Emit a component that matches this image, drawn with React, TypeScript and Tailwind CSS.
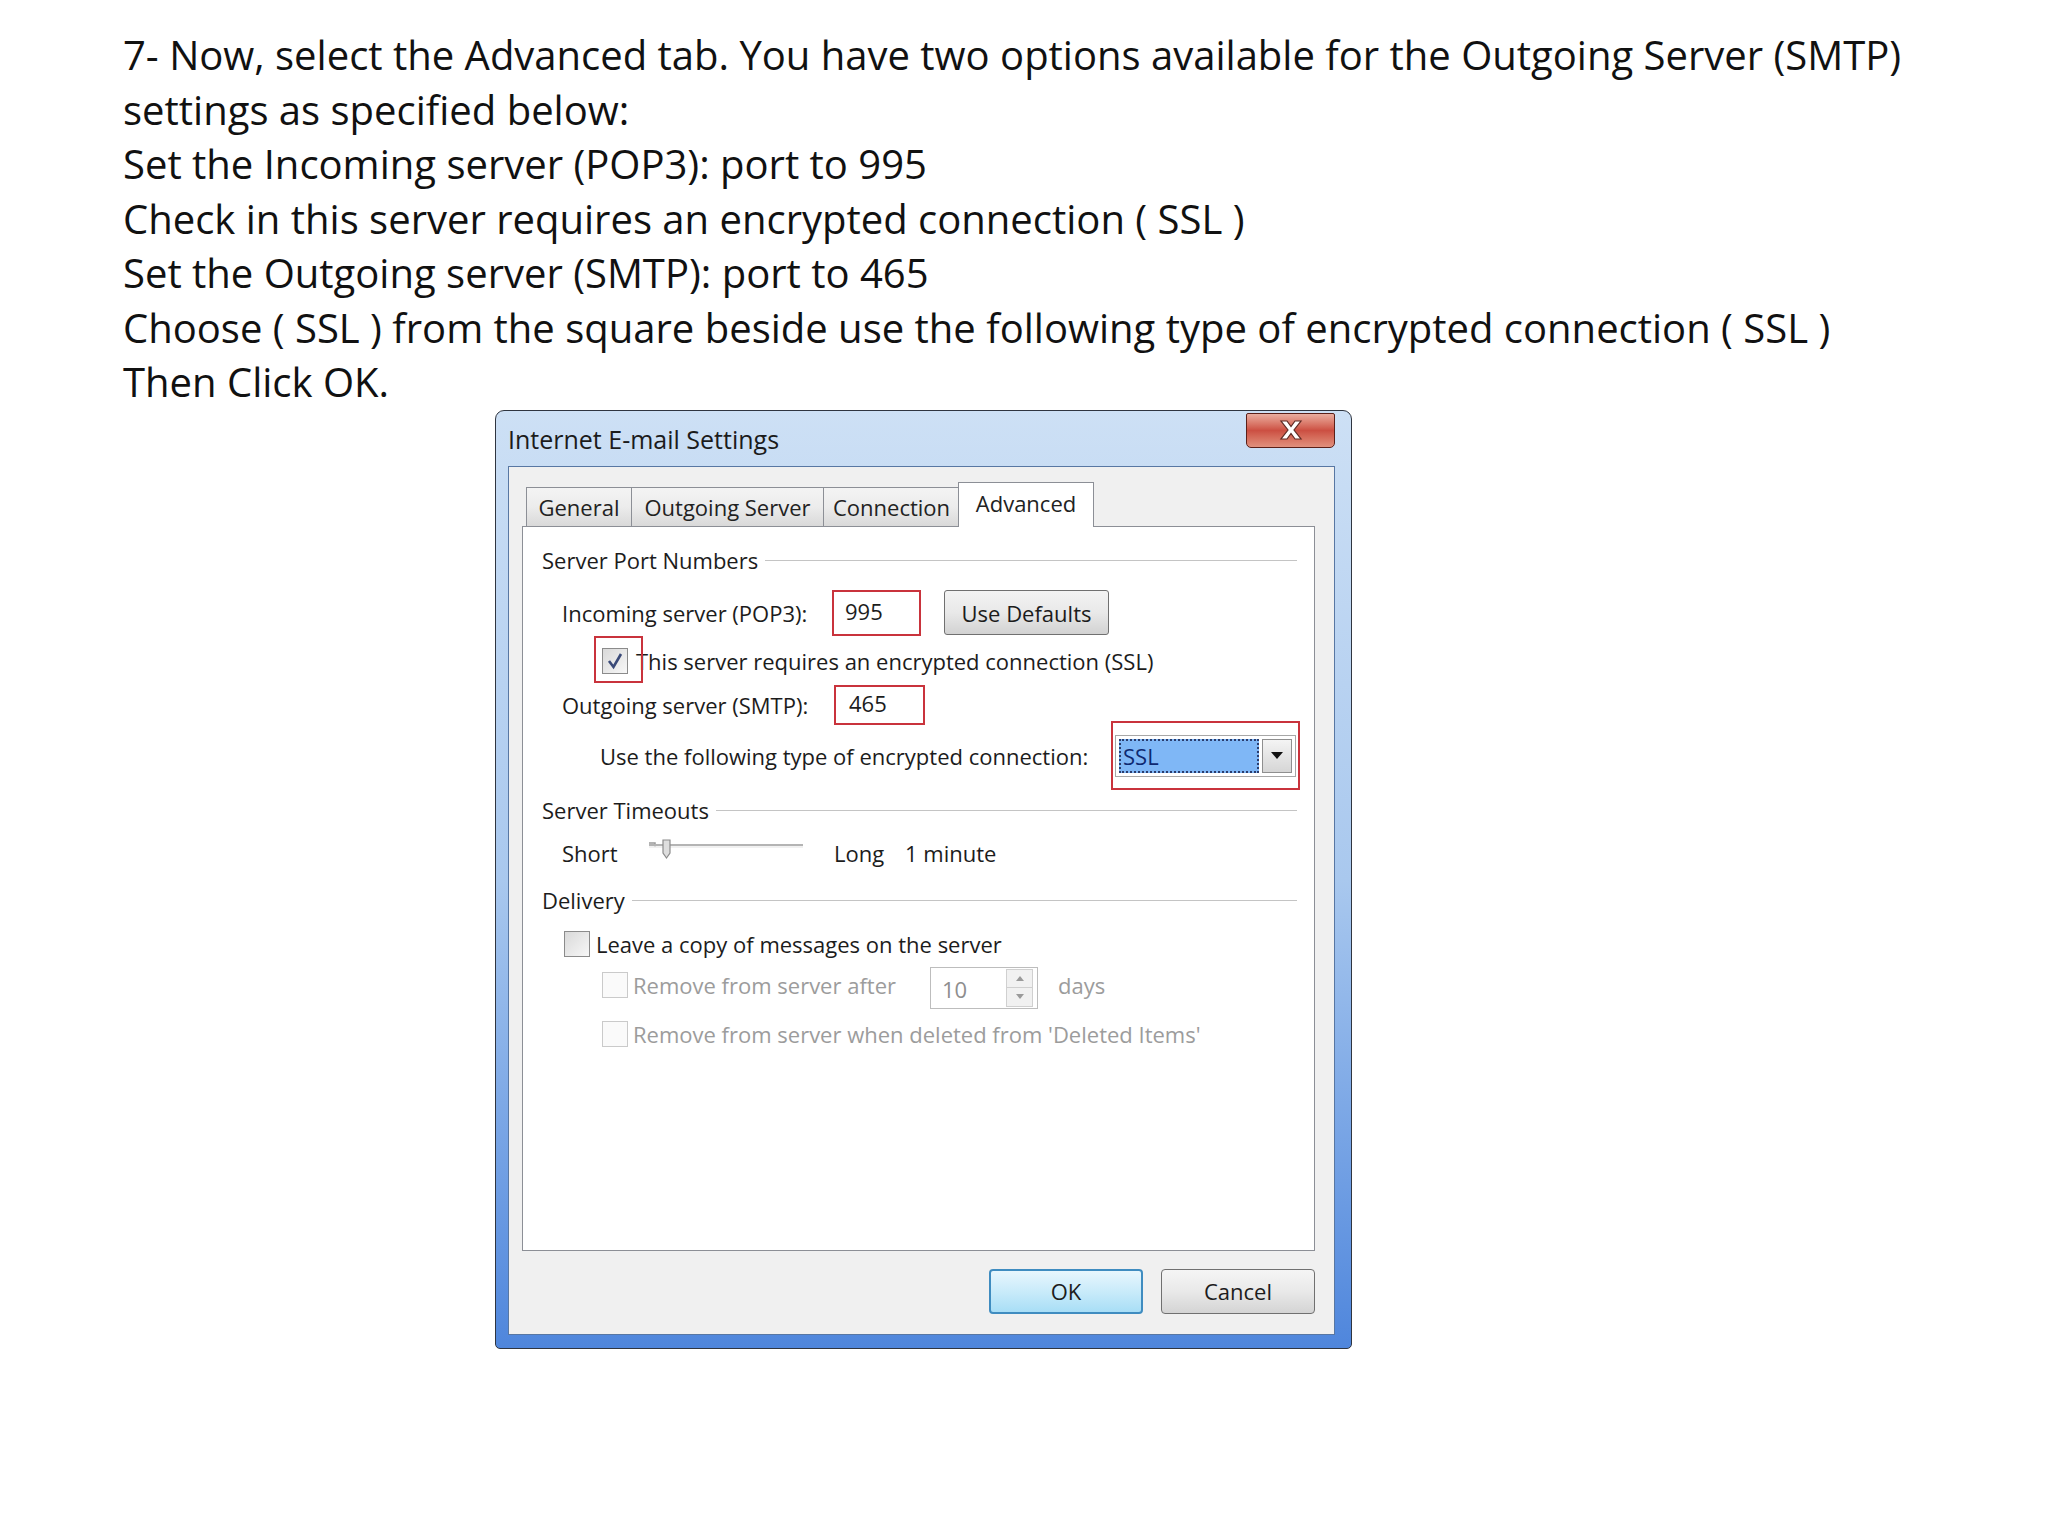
import React from "react";

const lines = [
  "7- Now, select the Advanced tab. You have two options available for the Outgoing Server (SMTP)",
  "settings as specified below:",
  "Set the Incoming server (POP3): port to 995",
  "Check in this server requires an encrypted connection ( SSL )",
  "Set the Outgoing server (SMTP): port to 465",
  "Choose ( SSL ) from the square beside use the following type of encrypted connection ( SSL )",
  "Then Click OK.",
];

const SectionHeading: React.FC<{ label: string; h: string }> = ({ label, h }) => (
  <div className={`${h} flex items-center pl-[19px] pr-[17px]`}>
    <span className="text-[#1c1c1c]">{label}</span>
    <div className="flex-1 h-px bg-[#c4c4c4] ml-[7px] mt-[2px]" />
  </div>
);

const CheckBox: React.FC<{ checked?: boolean; disabled?: boolean }> = ({ checked, disabled }) => (
  <div
    className={`w-[26px] h-[26px] border flex items-center justify-center ${
      disabled ? "border-[#cacaca] bg-[#fafafa]" : "border-[#8b8b8b] bg-gradient-to-br from-[#d9d9d9] to-[#f7f7f7]"
    }`}
  >
    {checked && (
      <svg width="18" height="18" viewBox="0 0 18 18">
        <path d="M3 9 L7.5 15 L15 2" fill="none" stroke="#3a4a78" strokeWidth="2.6" />
      </svg>
    )}
  </div>
);

function Dialog() {
  const tabs = [
    { name: "General", w: "w-[106px]" },
    { name: "Outgoing Server", w: "w-[193px]" },
    { name: "Connection", w: "w-[137px]" },
  ];

  return (
    <div className="ml-[495px] w-[857px] h-[939px] flex flex-col rounded-t-[9px] rounded-b-[5px] border border-[#2f3540] bg-gradient-to-b from-[#cde0f5] via-[#a9c8ee] to-[#4f86dc] pl-[12px] pr-[16px] pb-[13px] font-['Open_Sans',sans-serif] text-[22px]">
      {/* title bar */}
      <div className="h-[55px] flex items-start justify-between">
        <div className="pt-[12px] text-[25px] leading-[32px] text-[#1b1b1b]">Internet E-mail Settings</div>
        <div className="mt-[2px] w-[89px] h-[35px] rounded-b-[5px] rounded-t-[2px] border border-[#5b2019] bg-gradient-to-b from-[#e9ada0] via-[#cc4f42] to-[#e0907d] flex items-center justify-center">
          <svg width="26" height="20" viewBox="0 0 26 20">
            <path
              d="M3 1 H9 L13 6.5 L17 1 H23 L16 10 L23 19 H17 L13 13.5 L9 19 H3 L10 10 Z"
              fill="#ffffff"
              stroke="#5e2a24"
              strokeWidth="1.2"
            />
          </svg>
        </div>
      </div>

      {/* client area */}
      <div className="flex-1 flex flex-col border border-[#5877a3] bg-[#f0f0f0] pl-[13px] pr-[19px] pt-[15px] leading-none">
        {/* tabs */}
        <div className="relative z-10 -mb-px h-[45px] flex items-end pl-[4px]">
          {tabs.map((t) => (
            <div
              key={t.name}
              className={`${t.w} h-[40px] -mr-px border border-[#8c8f96] bg-gradient-to-b from-[#f4f4f4] via-[#ececec] to-[#d9d9d9] flex items-center justify-center text-[#222]`}
            >
              {t.name}
            </div>
          ))}
          <div className="w-[136px] h-[45px] -ml-px border border-b-0 border-[#8c8f96] bg-white flex items-center justify-center pb-[4px] text-[#222]">
            Advanced
          </div>
        </div>

        {/* panel */}
        <div className="h-[725px] border border-[#8c8f96] bg-white flex flex-col pt-[7px]">
          <SectionHeading label="Server Port Numbers" h="h-[52px]" />

          <div className="h-[54px] flex items-center pl-[39px]">
            <span className="w-[270px] text-[#1c1c1c]">Incoming server (POP3):</span>
            <div className="w-[89px] h-[46px] border-2 border-[#c9333c] bg-white flex items-center pl-[11px] pb-[3px] text-[#1c1c1c]">
              995
            </div>
            <div className="ml-[23px] w-[165px] h-[45px] rounded-[3px] border border-[#707070] bg-gradient-to-b from-[#f3f3f3] via-[#e9e9e9] to-[#d2d2d2] flex items-center justify-center text-[#1c1c1c]">
              Use Defaults
            </div>
          </div>

          <div className="h-[42px] flex items-center pl-[79px]">
            <div className="relative">
              <CheckBox checked />
              <div className="absolute -left-[8px] -top-[12px] w-[49px] h-[47px] border-2 border-[#c9333c]" />
            </div>
            <span className="ml-[8px] text-[#1c1c1c]">This server requires an encrypted connection (SSL)</span>
          </div>

          <div className="h-[46px] flex items-center pl-[39px]">
            <span className="w-[272px] text-[#1c1c1c]">Outgoing server (SMTP):</span>
            <div className="w-[91px] h-[40px] border-2 border-[#c9333c] bg-white flex items-center pl-[13px] pb-[3px] text-[#1c1c1c]">
              465
            </div>
          </div>

          <div className="h-[56px] flex items-center pl-[77px]">
            <span className="w-[511px] text-[#1c1c1c]">Use the following type of encrypted connection:</span>
            <div className="w-[189px] h-[69px] border-2 border-[#c9333c] flex items-center justify-center">
              <div className="w-[181px] h-[42px] border border-[#a7a7a7] bg-white p-[3px] flex">
                <div className="flex-1 border-2 border-dotted border-[#2a3d6e] bg-[#7fb7f6] flex items-center pl-[2px] text-[#0e2870]">
                  SSL
                </div>
                <div className="ml-[3px] w-[30px] border border-[#8f8f8f] bg-gradient-to-b from-[#f4f4f4] to-[#d6d6d6] flex items-center justify-center">
                  <svg width="12" height="8" viewBox="0 0 12 8">
                    <path d="M0 0 H12 L6 7 Z" fill="#111" />
                  </svg>
                </div>
              </div>
            </div>
          </div>

          <SectionHeading label="Server Timeouts" h="h-[52px]" />

          <div className="h-[34px] flex items-center pl-[39px]">
            <span className="w-[87px] text-[#1c1c1c]">Short</span>
            <svg width="154" height="24" viewBox="0 0 154 24" className="-mt-[8px]">
              <path d="M0 6 H6 V10" fill="none" stroke="#9a9a9a" strokeWidth="1.5" />
              <line x1="0" y1="8" x2="154" y2="8" stroke="#b4b4b4" strokeWidth="2" />
              <line x1="0" y1="10" x2="154" y2="10" stroke="#ececec" strokeWidth="1.5" />
              <path d="M14 3 H21 V16 L17.5 21 L14 16 Z" fill="#dedede" stroke="#8c8c8c" strokeWidth="1.2" />
            </svg>
            <span className="ml-[31px] w-[71px] text-[#1c1c1c]">Long</span>
            <span className="text-[#1c1c1c]">1 minute</span>
          </div>

          <SectionHeading label="Delivery" h="h-[60px]" />

          <div className="h-[28px] flex items-center pl-[41px]">
            <CheckBox />
            <span className="ml-[6px] text-[#1c1c1c]">Leave a copy of messages on the server</span>
          </div>

          <div className="h-[54px] flex items-center pl-[79px]">
            <CheckBox disabled />
            <span className="ml-[5px] w-[297px] text-[#9c9c9c]">Remove from server after</span>
            <div className="w-[108px] h-[42px] mt-[6px] border border-[#bdbdbd] bg-white flex items-center">
              <span className="flex-1 pl-[11px] pt-[2px] text-[#8e8e8e]">10</span>
              <div className="w-[27px] h-[38px] mr-[4px] border border-[#d0d0d0] bg-[#f1f1f1] flex flex-col items-center justify-center gap-[6px]">
                <svg width="8" height="5" viewBox="0 0 8 5">
                  <path d="M0 5 L4 0 L8 5 Z" fill="#9a9a9a" />
                </svg>
                <div className="w-full h-px bg-[#cfcfcf]" />
                <svg width="8" height="5" viewBox="0 0 8 5">
                  <path d="M0 0 L4 5 L8 0 Z" fill="#9a9a9a" />
                </svg>
              </div>
            </div>
            <span className="ml-[20px] text-[#9c9c9c]">days</span>
          </div>

          <div className="h-[44px] flex items-center pl-[79px]">
            <CheckBox disabled />
            <span className="ml-[5px] text-[#9c9c9c]">Remove from server when deleted from 'Deleted Items'</span>
          </div>
        </div>

        {/* buttons */}
        <div className="flex justify-end gap-[18px] mt-[18px] pr-0">
          <div className="w-[154px] h-[45px] rounded-[4px] border-2 border-[#3f8cc0] bg-gradient-to-b from-[#e8f6fd] via-[#c9ebfa] to-[#a8def6] flex items-center justify-center text-[#1c1c1c]">
            OK
          </div>
          <div className="w-[154px] h-[45px] rounded-[4px] border border-[#707070] bg-gradient-to-b from-[#f5f5f5] via-[#e9e9e9] to-[#d4d4d4] flex items-center justify-center text-[#1c1c1c]">
            Cancel
          </div>
        </div>
      </div>
    </div>
  );
}

export default function App() {
  return (
    <div className="w-[2048px] h-[1536px] bg-white overflow-hidden">
      <div className="pl-[123px] pt-[28px] text-[40px] leading-[54.5px] text-[#111] font-['Open_Sans',sans-serif]">
        {lines.map((l) => (
          <p key={l} className="whitespace-nowrap">
            {l}
          </p>
        ))}
      </div>
      <Dialog />
    </div>
  );
}
